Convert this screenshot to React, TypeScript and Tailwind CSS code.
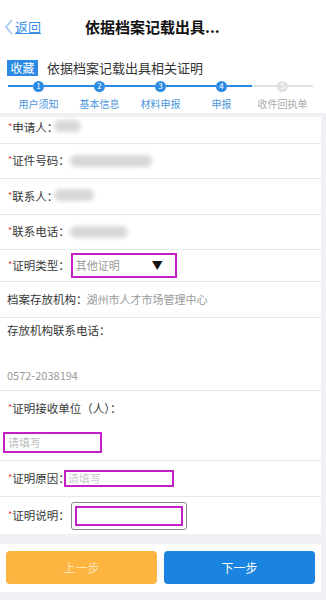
import React from 'react'

const steps = [
  { n: 1, label: '用户须知', on: true },
  { n: 2, label: '基本信息', on: true },
  { n: 3, label: '材料申报', on: true },
  { n: 4, label: '申报', on: true },
  { n: 5, label: '收件回执单', on: false },
]

function Star() {
  return <span className="text-[9px] text-[#e53935] relative -top-[2px]">*</span>
}

function Blur({ w }: { w: number }) {
  return (
    <span
      className="inline-block h-[12px] rounded-full bg-[#d8d8d8] blur-[2px]"
      style={{ width: w }}
    />
  )
}

function Row(props: { className?: string; children: React.ReactNode }) {
  return (
    <div
      className={
        'flex items-center border-b border-[#e6e8ec] bg-white pl-[8px] ' +
        (props.className ?? '')
      }
    >
      {props.children}
    </div>
  )
}

export default function App() {
  return (
    <div
      className="w-[326px] h-[600px] overflow-hidden bg-white text-[#383838]"
      style={{ fontFamily: '"Noto Sans CJK SC", "Noto Sans", sans-serif' }}
    >
      {/* header */}
      <div className="flex h-[54px] items-center pl-[3px]">
        <span className="flex items-center text-[#3a8ee6]">
          <svg width="12" height="18" viewBox="0 0 12 18" fill="none">
            <path d="M9 2 L3 9 L9 16" stroke="#9fc6ee" strokeWidth="1.6" />
          </svg>
          <span className="text-[13px] underline">返回</span>
        </span>
        <span className="ml-[44px] text-[15px] font-bold text-[#111]">
          依据档案记载出具...
        </span>
      </div>

      {/* title */}
      <div className="mt-[4px] flex h-[20px] items-center pl-[7px]">
        <span className="flex h-[16px] w-[31px] items-center justify-center bg-[#2a8ae4] text-[12px] text-white">
          收藏
        </span>
        <span className="ml-[9px] text-[13px] text-[#333]">依据档案记载出具相关证明</span>
      </div>

      {/* steps */}
      <div className="grid grid-cols-5 pl-[8px] pr-[13px] pt-[2px]">
        {steps.map((s, i) => (
          <div key={s.n} className="flex flex-col items-center">
            <div className="flex h-[12px] w-full items-center">
              <div className={'h-[2px] flex-1 ' + (s.on ? 'bg-[#2a8ae4]' : 'bg-[#e2e2e2]')} />
              <div
                className={
                  'flex h-[11px] w-[11px] items-center justify-center rounded-full text-[8px] leading-none text-white ' +
                  (s.on ? 'bg-[#2a8ae4]' : 'bg-[#e0e0e0]')
                }
              >
                {s.n}
              </div>
              <div className={'h-[2px] flex-1 ' + (i < 4 ? 'bg-[#2a8ae4]' : 'bg-[#e2e2e2]')} />
            </div>
            <span
              className={
                'mt-[5px] whitespace-nowrap text-[10px] leading-[14px] ' +
                (s.on ? 'text-[#4a95dd]' : 'text-[#aaa]')
              }
            >
              {s.label}
            </span>
          </div>
        ))}
      </div>

      {/* form */}
      <div className="mt-[2px] bg-[#eef0f4] pt-[4px] pr-[5px] text-[11.5px]">
        <Row className="h-[27px] items-end overflow-hidden pb-[7px]">
          <span className="leading-[14px]">
            <Star />申请人：
          </span>
          <span className="-ml-[4px]"><Blur w={27} /></span>
        </Row>
        <Row className="h-[35px]">
          <span>
            <Star />证件号码：
          </span>
          <Blur w={82} />
        </Row>
        <Row className="h-[36px]">
          <span>
            <Star />联系人：
          </span>
          <span className="-ml-[4px]"><Blur w={40} /></span>
        </Row>
        <Row className="h-[35px]">
          <span>
            <Star />联系电话：
          </span>
          <Blur w={58} />
        </Row>
        <Row className="h-[32px]">
          <span>
            <Star />证明类型：
          </span>
          <div className="ml-[1px] flex h-[25px] w-[106px] items-center justify-between border-2 border-[#c41fc4] pl-[3px] pr-[12px]">
            <span className="text-[11px] text-[#999]">其他证明</span>
            <span className="text-[11px] text-[#111]">▼</span>
          </div>
        </Row>
        <Row className="h-[36px] !pl-[7px]">
          <span>档案存放机构：</span>
          <span className="-ml-[1px] text-[11px] text-[#999]">湖州市人才市场管理中心</span>
        </Row>
        <Row className="h-[73px] flex-col !items-start justify-start !pl-[7px]">
          <span className="mt-[3px] leading-[18px]">存放机构联系电话：</span>
          <span className="mt-[27px] text-[11px] leading-[18px] text-[#999]">0572-2038194</span>
        </Row>
        <div className="flex h-[70px] flex-col border-b border-[#e6e8ec] bg-white">
          <span className="mt-[8px] pl-[8px] leading-[18px]">
            <Star />证明接收单位（人）：
          </span>
          <div className="ml-[3px] mt-[13px] flex h-[21px] w-[99px] items-center border-2 border-[#c41fc4] pl-[3px]">
            <span className="text-[11px] text-[#bbb]">请填写</span>
          </div>
        </div>
        <Row className="h-[36px]">
          <span>
            <Star />证明原因：
          </span>
          <div className="-ml-[6px] flex h-[17px] w-[110px] items-center border-2 border-[#c41fc4] pl-[2px]">
            <span className="text-[11px] text-[#ccc]">请填写</span>
          </div>
        </Row>
        <Row className="h-[37px] border-b-0">
          <span>
            <Star />证明说明：
          </span>
          <div className="ml-[1px] flex h-[28px] w-[116px] items-center justify-center rounded-[3px] border border-[#888]">
            <div className="h-[20px] w-[108px] border-2 border-[#c41fc4]" />
          </div>
        </Row>
        <div className="h-[10px] bg-[#eef0f4]" />
        <div className="flex gap-[7px] bg-white px-[6px] pt-[7px] pb-[8px]">
          <button className="h-[33px] flex-1 rounded-[4px] bg-[#fdb441] text-[12px] text-[#ffe2b0]">
            上一步
          </button>
          <button className="h-[33px] flex-1 rounded-[4px] bg-[#1b84e0] text-[12px] text-white">
            下一步
          </button>
        </div>
        <div className="h-[10px] bg-[#eef0f4]" />
      </div>
    </div>
  )
}
